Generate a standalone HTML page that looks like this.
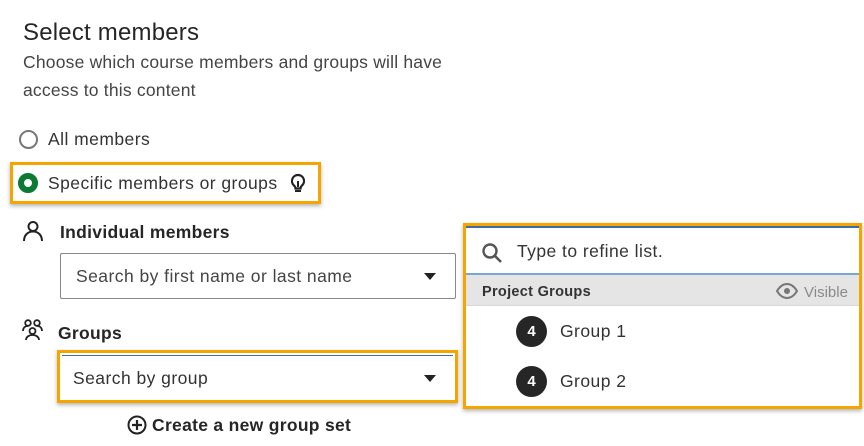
<!DOCTYPE html>
<html><head><meta charset="utf-8"><style>
*{margin:0;padding:0;box-sizing:border-box}
body{width:864px;height:446px;background:#fff;font-family:"Liberation Sans",sans-serif;color:#262626;position:relative;overflow:hidden}
.a{position:absolute;white-space:nowrap;line-height:1}
.ob{position:absolute;border:3px solid #f5a500;box-shadow:0 2px 4px rgba(0,0,0,.3)}
.t{font-size:17.5px;letter-spacing:0.45px}
</style></head><body>
<div class="a" style="left:23px;top:21px;font-size:24px;color:#262626;letter-spacing:0.2px">Select members</div>
<div class="a" style="left:23px;top:54px;font-size:17.5px;color:#444;letter-spacing:0.2px">Choose which course members and groups will have</div>
<div class="a" style="left:23px;top:82px;font-size:17.5px;color:#444;letter-spacing:0.2px">access to this content</div>

<div class="a" style="left:19px;top:130px;width:19px;height:19px;border:2px solid #777;border-radius:50%"></div>
<div class="a t" style="left:48px;top:131px;color:#333">All members</div>

<div class="ob" style="left:10px;top:162px;width:311px;height:42px"></div>
<div class="a" style="left:18px;top:173px;width:20px;height:20px;border:6px solid #0b7a32;border-radius:50%;background:#fff"></div>
<div class="a t" style="left:48px;top:175px;color:#333">Specific members or groups</div>
<svg class="a" style="left:289px;top:173px" width="18" height="20" viewBox="0 0 18 20"><path d="M9 2a6 6 0 0 0-4 10.5c1 1 1.5 2 1.5 3h5c0-1 .5-2 1.5-3A6 6 0 0 0 9 2z" fill="none" stroke="#222" stroke-width="2.2"/><path d="M9 8v6" stroke="#222" stroke-width="2"/><path d="M6 18h6" stroke="#222" stroke-width="2"/></svg>

<svg class="a" style="left:22px;top:220px" width="22" height="22" viewBox="0 0 22 22"><circle cx="11" cy="6.5" r="4.5" fill="none" stroke="#222" stroke-width="2"/><path d="M2 21c0-6 4-9.5 9-9.5s9 3.5 9 9.5" fill="none" stroke="#222" stroke-width="2"/></svg>
<div class="a t" style="left:60px;top:224px;font-weight:bold;color:#262626;letter-spacing:0.3px">Individual members</div>
<div class="a" style="left:60px;top:253px;width:396px;height:46px;border:1px solid #888;border-radius:2px"></div>
<div class="a t" style="left:76px;top:268px;color:#444">Search by first name or last name</div>
<div class="a" style="left:424px;top:273px;width:0;height:0;border-left:6px solid transparent;border-right:6px solid transparent;border-top:7px solid #222"></div>

<svg class="a" style="left:22px;top:319px" width="22" height="22" viewBox="0 0 22 22"><circle cx="6" cy="4" r="2.8" fill="none" stroke="#222" stroke-width="1.8"/><circle cx="15" cy="4" r="2.8" fill="none" stroke="#222" stroke-width="1.8"/><circle cx="10.5" cy="12" r="3" fill="none" stroke="#222" stroke-width="1.8"/><path d="M1 12c0-3 2-5 5-5M20 12c0-3-2-5-5-5M4 21c0-3 3-5 6.5-5s6.5 2 6.5 5" fill="none" stroke="#222" stroke-width="1.8"/></svg>
<div class="a t" style="left:58px;top:325px;font-weight:bold;color:#262626;letter-spacing:0.3px">Groups</div>

<div class="ob" style="left:57px;top:350px;width:401px;height:53px"></div>
<div class="a" style="left:62px;top:355px;width:391px;height:1px;background:#3a6ea5"></div>
<div class="a t" style="left:73px;top:370px;color:#333">Search by group</div>
<div class="a" style="left:424px;top:375px;width:0;height:0;border-left:6px solid transparent;border-right:6px solid transparent;border-top:7px solid #222"></div>

<svg class="a" style="left:127px;top:415px" width="20" height="20" viewBox="0 0 20 20"><circle cx="10" cy="10" r="8.5" fill="none" stroke="#222" stroke-width="2"/><path d="M10 5v10M5 10h10" stroke="#222" stroke-width="2.2"/></svg>
<div class="a t" style="left:152px;top:417px;font-weight:bold;color:#262626;letter-spacing:0.3px">Create a new group set</div>

<div class="ob" style="left:463px;top:223px;width:399px;height:186px"></div>
<div class="a" style="left:466px;top:226px;width:393px;height:2px;background:#3a6ea5"></div>
<div class="a" style="left:466px;top:273px;width:393px;height:2px;background:#7aa6d6"></div>
<svg class="a" style="left:481px;top:242px" width="22" height="22" viewBox="0 0 22 22"><circle cx="9" cy="9" r="6.5" fill="none" stroke="#555" stroke-width="2.4"/><path d="M14 14l6 6" stroke="#555" stroke-width="2.6"/></svg>
<div class="a t" style="left:517px;top:243px;color:#333">Type to refine list.</div>
<div class="a" style="left:466px;top:275px;width:393px;height:31px;background:#e5e5e5;border-bottom:1px solid #d8d8d8"></div>
<div class="a" style="left:482px;top:285px;font-size:14.5px;font-weight:bold;color:#333;letter-spacing:0.3px">Project Groups</div>
<svg class="a" style="left:776px;top:283px" width="22" height="16" viewBox="0 0 22 16"><path d="M1 8c3-5 6.5-7 10-7s7 2 10 7c-3 5-6.5 7-10 7S4 13 1 8z" fill="none" stroke="#777" stroke-width="2"/><circle cx="11" cy="8" r="3" fill="#777"/></svg>
<div class="a" style="left:804px;top:285px;font-size:15px;color:#8a8a8a">Visible</div>

<div class="a" style="left:516px;top:316px;width:31px;height:31px;border-radius:50%;background:#262626;color:#fff;font-weight:bold;font-size:15px;line-height:31px;text-align:center">4</div>
<div class="a t" style="left:560px;top:323px;color:#333">Group 1</div>
<div class="a" style="left:516px;top:366px;width:31px;height:31px;border-radius:50%;background:#262626;color:#fff;font-weight:bold;font-size:15px;line-height:31px;text-align:center">4</div>
<div class="a t" style="left:560px;top:373px;color:#333">Group 2</div>
</body></html>
